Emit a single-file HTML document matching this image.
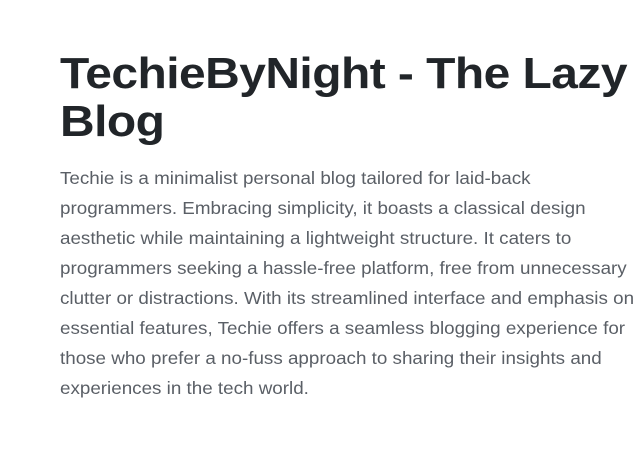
<!DOCTYPE html>
<html><head><style>
html,body{margin:0;padding:0;background:#fff;width:640px;height:462px;overflow:hidden}
.w{position:absolute;left:60px;top:0}
h1{margin:0;position:absolute;top:50px;left:0;font:bold 44px/48px "Liberation Sans",sans-serif;color:#212529;white-space:nowrap;letter-spacing:-0.5px}
h1 span{display:block;transform-origin:left;transform:scaleX(1.09)}
.p{position:absolute;top:163px;left:0;font:17.5px/30px "Liberation Sans",sans-serif;color:#5a5f66;white-space:nowrap;font-weight:300}
.p span{display:block;transform-origin:left;transform:scaleX(1.075)}
</style></head><body><div class="w">
<h1><span>TechieByNight - The Lazy</span><span>Blog</span></h1>
<div class="p">
<span>Techie is a minimalist personal blog tailored for laid-back</span>
<span>programmers. Embracing simplicity, it boasts a classical design</span>
<span>aesthetic while maintaining a lightweight structure. It caters to</span>
<span>programmers seeking a hassle-free platform, free from unnecessary</span>
<span>clutter or distractions. With its streamlined interface and emphasis on</span>
<span>essential features, Techie offers a seamless blogging experience for</span>
<span>those who prefer a no-fuss approach to sharing their insights and</span>
<span>experiences in the tech world.</span>
</div></div></body></html>
